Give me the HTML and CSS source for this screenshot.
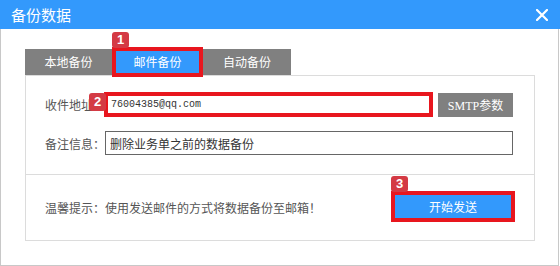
FILE: index.html
```html
<!DOCTYPE html>
<html lang="zh-CN">
<head>
    <meta charset="UTF-8">
    <title>备份数据</title>
    <link rel="stylesheet" href="styles.css">
</head>
<body>
    <div class="window">
        <div class="titlebar">
            <span class="title">备份数据</span>
            <svg class="close" width="12" height="12" viewBox="0 0 12 12">
                <path d="M1 1 L11 11 M11 1 L1 11" stroke="#fff" stroke-width="2.2" stroke-linecap="square"/>
            </svg>
        </div>

        <div class="window-body">
            <!-- Tabs -->
            <div class="tabs">
                <div class="tab">本地备份</div>
                <div class="tab active marked">
                    <span class="badge badge-tab">1</span>
                    邮件备份
                </div>
                <div class="tab">自动备份</div>
            </div>

            <div class="panel">
                <div class="panel-form">
                    <div class="row">
                        <label class="label label-first">收件地址：</label>
                        <div class="field-wrap">
                            <span class="badge badge-field">2</span>
                            <input class="field field-marked" type="text" value="76004385@qq.com">
                        </div>
                        <button class="btn-gray">SMTP参数</button>
                    </div>
                    <div class="row">
                        <label class="label">备注信息：</label>
                        <input class="field field-note" type="text" value="删除业务单之前的数据备份">
                    </div>
                </div>

                <div class="panel-footer">
                    <span class="hint">温馨提示：使用发送邮件的方式将数据备份至邮箱！</span>
                    <div class="send-wrap">
                        <span class="badge badge-send">3</span>
                        <button class="btn-send">开始发送</button>
                    </div>
                </div>
            </div>
        </div>
    </div>
</body>
</html>
```

FILE: styles.css
```css
body {
    margin: 0;
    padding: 0;
    background-color: #ffffff;
    font-family: "Noto Sans CJK SC", "Liberation Sans", sans-serif;
    font-size: 12px;
    color: #555555;
}

.window {
    width: 560px;
    height: 266px;
}

/* Titelleiste */
.titlebar {
    height: 29px;
    background-color: #3399fc;
    display: flex;
    align-items: center;
    justify-content: space-between;
    padding: 0 12px 0 11px;
    box-sizing: border-box;
}

.title {
    color: #ffffff;
    font-size: 15px;
    line-height: 1;
}

.close {
    display: block;
}

.window-body {
    width: 559px;
    height: 237px;
    box-sizing: border-box;
    border: 1px solid #c8c8c8;
    border-top: none;
    padding: 20px 0 0 24px;
}

/* Tabs */
.tabs {
    display: flex;
    gap: 2px;
    height: 26px;
}

.tab {
    position: relative;
    width: 87px;
    height: 26px;
    line-height: 26px;
    text-align: center;
    background-color: #808080;
    color: #ffffff;
    font-size: 12px;
}

.tab:last-child {
    width: 88px;
}

.tab.active {
    background-color: #3399fc;
}

.tab.marked {
    outline: 4px solid #e8161e;
    outline-offset: -2px;
}

.badge {
    position: absolute;
    z-index: 2;
    width: 17px;
    height: 16px;
    line-height: 16px;
    border-radius: 3px;
    background-color: #d43a44;
    color: #ffffff;
    font-family: "Liberation Sans", sans-serif;
    font-weight: bold;
    font-size: 13px;
    text-align: center;
}

.badge-tab {
    left: -2px;
    top: -17px;
}

/* Inhalt */
.panel {
    width: 510px;
    height: 166px;
    box-sizing: border-box;
    border: 1px solid #dcdcdc;
}

.panel-form {
    height: 99px;
    box-sizing: border-box;
    padding: 16px 0 0 19px;
    border-bottom: 1px solid #dcdcdc;
}

.row {
    display: flex;
    align-items: center;
}

.row + .row {
    margin-top: 14px;
}

.label {
    width: 60px;
    flex-shrink: 0;
    white-space: nowrap;
    overflow: hidden;
    color: #555555;
    font-size: 12px;
}

.label-first {
    width: 59px;
}

.field-wrap {
    position: relative;
}

.field {
    display: block;
    box-sizing: border-box;
    margin: 0;
    color: #333333;
    background: #ffffff;
    outline: none;
}

.field-marked {
    width: 329px;
    height: 25px;
    border: 4px solid #e8161e;
    padding: 0 0 0 3px;
    font-family: "Liberation Mono", monospace;
    font-size: 10px;
}

.field-note {
    width: 408px;
    height: 24px;
    border: 1px solid #666666;
    padding: 0 0 0 4px;
    font-family: "Noto Sans CJK SC", sans-serif;
    font-size: 12px;
}

.badge-field {
    left: -15px;
    top: 1px;
    height: 18px;
    line-height: 18px;
}

.btn-gray {
    margin: 1px 0 0 5px;
    width: 75px;
    height: 24px;
    border: none;
    background-color: #808080;
    color: #ffffff;
    font-family: "Liberation Serif", "Noto Sans CJK SC", serif;
    font-size: 12px;
    padding: 0;
}

.panel-footer {
    display: flex;
    align-items: center;
    justify-content: space-between;
    height: 64px;
    box-sizing: border-box;
    padding: 0 19px 2px 19px;
}

.hint {
    margin-top: 3px;
    color: #555555;
    font-size: 12px;
}

.send-wrap {
    position: relative;
}

.btn-send {
    display: block;
    width: 124px;
    height: 31px;
    border: 4px solid #e8161e;
    background-color: #3399fc;
    color: #ffffff;
    font-family: "Noto Sans CJK SC", sans-serif;
    font-size: 12px;
    padding: 0;
}

.badge-send {
    left: 0;
    top: -15px;
}
```
